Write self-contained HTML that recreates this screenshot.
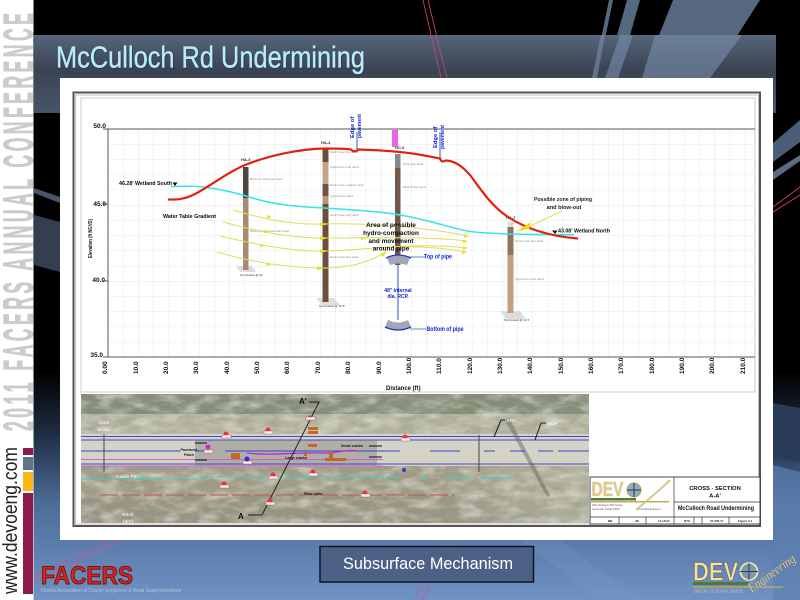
<!DOCTYPE html>
<html><head><meta charset="utf-8"><title>McCulloch Rd Undermining</title>
<style>html,body{margin:0;padding:0;background:#000;width:800px;height:600px;overflow:hidden}svg{display:block}text{font-family:"Liberation Sans",sans-serif}</style></head>
<body>
<svg xmlns="http://www.w3.org/2000/svg" width="800" height="600" viewBox="0 0 800 600">
<defs>
<linearGradient id="bg" x1="0" y1="0" x2="0" y2="1"><stop offset="0" stop-color="#000"/><stop offset=".62" stop-color="#000"/><stop offset=".72" stop-color="#1e2c42"/><stop offset=".84" stop-color="#4d6c9a"/><stop offset="1" stop-color="#7092c4"/></linearGradient>
<linearGradient id="band" x1="0" y1="0" x2="0" y2="1"><stop offset="0" stop-color="#56667b"/><stop offset=".45" stop-color="#3a4352"/><stop offset="1" stop-color="#47556a"/></linearGradient>
<linearGradient id="fade" x1="0" y1="0" x2="1" y2="0"><stop offset="0" stop-color="#bdbdaa" stop-opacity="0"/><stop offset="1" stop-color="#bdbdaa" stop-opacity=".75"/></linearGradient>
<pattern id="grid" x="108" y="129" width="15.16" height="15.2" patternUnits="userSpaceOnUse"><path d="M0 0V15.2M0 0H15.16" fill="none" stroke="#dfe3e3" stroke-width=".8"/></pattern>
<filter id="noise" x="0" y="0" width="100%" height="100%"><feTurbulence type="fractalNoise" baseFrequency=".06 .13" numOctaves="3" seed="4"/><feColorMatrix values="0 0 0 0 .3  0 0 0 0 .32  0 0 0 0 .25  1.2 0 0 0 -.5"/></filter>
<filter id="noise2" x="0" y="0" width="100%" height="100%"><feTurbulence type="fractalNoise" baseFrequency=".05 .11" numOctaves="3" seed="11"/><feColorMatrix values="0 0 0 0 .85  0 0 0 0 .85  0 0 0 0 .75  1.2 0 0 0 -.48"/></filter>
<pattern id="hatch" width="2.500" height="2.500" patternUnits="userSpaceOnUse"><rect width="2.500" height="2.500" fill="#bcbbb3"/><path d="M0 2.500L2.500 0" stroke="#93928b" stroke-width=".6"/></pattern>
<filter id="b1"><feGaussianBlur stdDeviation=".38"/></filter>
<filter id="b2"><feGaussianBlur stdDeviation=".25"/></filter>
</defs>

<rect width="800" height="600" fill="url(#bg)"/>
<path d="M773 403L800 408V462L773 458Z" fill="#2a3c57"/>
<path d="M773 465L800 472V600H773Z" fill="#5e7fb0" opacity=".7"/>
<path d="M34 188L60 197V203L34 193Z" fill="#48566a"/>
<path d="M34 215L60 222V272L34 265Z" fill="#333e50"/>
<path d="M520 540L600 600H640L560 540Z" fill="#86a2cc" opacity=".18"/>
<path d="M609 0H613L597 78H593Z" fill="#56687f"/>
<path d="M627 0H640L618 78H605Z" fill="#56687f"/>
<path d="M673 0H760L710 78H642Z" fill="#56687f"/>
<path d="M423 0L441 78M428 0L447 78" stroke="#d8447c" stroke-width=".8" fill="none"/>
<rect x="34" y="35" width="742" height="78" fill="url(#band)"/>
<path d="M601 35H605L597 78H592Z" fill="#7a8fac" opacity=".6"/>
<path d="M620 35H633L618 78H605Z" fill="#7a8fac" opacity=".6"/>
<path d="M655 35H742L710 78H642Z" fill="#7a8fac" opacity=".6"/>
<path d="M431 35L441 78M436 35L447 78" stroke="#d8447c" stroke-width=".8" fill="none" opacity=".9"/>
<path d="M773 143L800 120V142L773 162Z" fill="#4c5d76"/>
<path d="M773 172L800 155V161L773 180Z" fill="#5a6b84"/>
<path d="M773 207L800 187M773 212L800 195" stroke="#d8447c" stroke-width=".8" fill="none"/>
<path d="M453 540L422 600M446 540L415 600" stroke="#c9569a" stroke-width=".8" fill="none"/>
<path d="M108 540L33 577M122 540L33 582" stroke="#c9569a" stroke-width=".8" fill="none"/>

<rect x="0" y="0" width="33.500" height="600" fill="#fff"/>
<text transform="translate(32.500,431) rotate(-90) scale(.42,1)" font-size="42" font-weight="700" fill="#c9cbce" stroke="#c9cbce" stroke-width=".9" textLength="995" lengthAdjust="spacing" filter="url(#b2)">2011 FACERS ANNUAL CONFERENCE</text>
<rect x="23" y="448" width="10" height="7" fill="#8c1a4b"/>
<rect x="23" y="457" width="10" height="13" fill="#627387"/>
<rect x="23" y="472" width="10" height="19" fill="#fcb813"/>
<rect x="23" y="493" width="10" height="101" fill="#8c1a4b"/>
<text transform="translate(17,594) rotate(-90)" font-size="20" fill="#222" textLength="147" lengthAdjust="spacingAndGlyphs">www.devoeng.com</text>

<text x="56" y="67.500" font-size="31" fill="#2c3a48" opacity=".7" stroke="#2c3a48" stroke-width=".4" textLength="309" lengthAdjust="spacingAndGlyphs" transform="translate(1,1)">McCulloch Rd Undermining</text>
<text x="56" y="67.500" font-size="31" fill="#b9ecfb" stroke="#b9ecfb" stroke-width=".35" textLength="309" lengthAdjust="spacingAndGlyphs">McCulloch Rd Undermining</text>

<rect x="60" y="78" width="713" height="462" fill="#fff"/>
<g filter="url(#b1)">
<rect x="73.500" y="92.500" width="686.500" height="433.500" fill="#fff" stroke="#555" stroke-width="2"/>
<rect x="75.500" y="95" width="683" height="429" fill="none" stroke="#aaa" stroke-width=".7"/>
<rect x="81" y="98" width="674" height="294" fill="none" stroke="#ccc" stroke-width="1"/>
<rect x="108" y="129" width="647" height="228" fill="url(#grid)"/>
<path d="M755 129H108V357H755" fill="none" stroke="#555" stroke-width="1"/>
<path d="M103 129H108M103 204H108M103 281H108M103 357H108" stroke="#222" stroke-width=".8"/>
<g font-size="6.500" font-weight="700" fill="#111" text-anchor="end">
<text x="106" y="128">50.0</text><text x="106" y="206">45.0</text><text x="105" y="282">40.0</text><text x="103" y="357">35.0</text>
</g>
<text transform="translate(92,258) rotate(-90)" font-size="5.800" font-weight="700" fill="#111" textLength="39" lengthAdjust="spacingAndGlyphs">Elevation (ft NGVD)</text>
<g font-size="6.500" font-weight="700" fill="#111">
<text transform="translate(107,374) rotate(-90)">0.00</text><text transform="translate(138,374) rotate(-90)">10.0</text><text transform="translate(168,374) rotate(-90)">20.0</text><text transform="translate(198,374) rotate(-90)">30.0</text><text transform="translate(229,374) rotate(-90)">40.0</text><text transform="translate(259,374) rotate(-90)">50.0</text><text transform="translate(289,374) rotate(-90)">60.0</text><text transform="translate(320,374) rotate(-90)">70.0</text><text transform="translate(350,374) rotate(-90)">80.0</text><text transform="translate(381,374) rotate(-90)">90.0</text><text transform="translate(411,374) rotate(-90)">100.0</text><text transform="translate(441,374) rotate(-90)">110.0</text><text transform="translate(472,374) rotate(-90)">120.0</text><text transform="translate(502,374) rotate(-90)">130.0</text><text transform="translate(532,374) rotate(-90)">140.0</text><text transform="translate(563,374) rotate(-90)">150.0</text><text transform="translate(593,374) rotate(-90)">160.0</text><text transform="translate(623,374) rotate(-90)">170.0</text><text transform="translate(654,374) rotate(-90)">180.0</text><text transform="translate(684,374) rotate(-90)">190.0</text><text transform="translate(714,374) rotate(-90)">200.0</text><text transform="translate(745,374) rotate(-90)">210.0</text>
</g>
<text x="386" y="390" font-size="6" font-weight="700" fill="#111">Distance (ft)</text>

<path d="M236 266H252L256 272H240Z" fill="#ddd"/>
<path d="M316 298H334L340 305H322Z" fill="#ddd"/>
<path d="M500 311H520L526 319H506Z" fill="#ddd"/>
<rect x="243" y="167" width="5.500" height="31" fill="#4d4540"/><rect x="243" y="198" width="5.500" height="72" fill="#a98a74"/>
<rect x="322.500" y="149" width="6" height="13" fill="#6a5040"/><rect x="322.500" y="162" width="6" height="22" fill="#c6a488"/><rect x="322.500" y="184" width="6" height="12" fill="#6d5444"/><rect x="322.500" y="196" width="6" height="8" fill="#b09878"/><rect x="322.500" y="204" width="6" height="98" fill="#6b4f3d"/>
<rect x="395" y="154" width="5.500" height="14" fill="#888"/><rect x="395" y="168" width="5.500" height="97" fill="#6e5a4e"/>
<rect x="507.500" y="222" width="6" height="5" fill="#ddd"/><rect x="507.500" y="227" width="6" height="28" fill="#8c7462"/><rect x="507.500" y="255" width="6" height="58" fill="#c49e80"/>
<g font-size="3" fill="#888">
<text x="250" y="180">Brown to dark gray sand</text><text x="250" y="232">Brown clayey sand with roots</text>
<text x="330" y="153">Dark brown fine sand</text><text x="330" y="168">Light brown fine sand</text><text x="330" y="186">Dark brown organic sand</text><text x="330" y="197">Light brown sand</text><text x="330" y="216">Dark brown silty sand</text><text x="330" y="258">Dark brown fine sand</text>
<text x="403" y="165">Dark gray sand</text><text x="403" y="188">Dark brown sand</text><text x="515" y="242">Dark brown fine sand</text><text x="515" y="280">Light brown fine sand</text>
</g>
<g font-size="4" font-weight="700" fill="#333"><text x="241" y="161">HA-3</text><text x="321" y="144">HA-4</text><text x="395" y="149">HC-6</text><text x="506" y="219">HA-7</text></g>
<g font-size="3" fill="#333"><text x="240" y="276">Terminated @ 11'</text><text x="319" y="307">Terminated @ 16.5'</text><text x="504" y="321">Terminated @ 11.5'</text></g>

<g fill="none" stroke="#dede5a" stroke-width="1">
<path d="M233 210C260 218 290 225 320 224C360 223 420 226 468 236"/>
<path d="M223 222C260 232 290 238 323 238C370 238 420 236 467 241"/>
<path d="M220 236C250 243 290 252 325 251C370 250 410 242 467 248"/>
<path d="M217 252C250 262 290 268 323 268C350 268 370 262 386 252"/>
<path d="M395 247C420 246 445 248 466 252"/>
</g>
<g fill="#e4e021">
<path d="M267 215L272 217L267 218.500Z"/><path d="M264 230L270 231.500L264 233Z"/><path d="M260 244L266 245.500L260 247Z"/><path d="M267 263L272 264.500L266 266Z"/>
<path d="M320 222.500L329 224L320 226ZM320 236.500L329 238L320 240ZM320 249.500L329 251L320 253ZM317 266.500L326 268L317 270Z"/>
<path d="M464 234L469 236L464 238ZM463 240L468 241L463 243ZM463 246.500L468 248L463 250ZM462 250.500L467 252L462 254Z"/>
<path d="M361 237L367 238L361 240Z"/><path d="M380 254L387 251L383 257Z"/>
</g>
<path d="M171 186.500C190 186 200 186 210 188C225 190 240 194 256 199C280 206 305 207 325 208C355 210 385 212 400 215C430 220 450 228 470 231.500C490 234 520 234.500 574 234.700" fill="none" stroke="#35e4e8" stroke-width="1.500"/>
<path d="M168 199.500C180 200 187 198 195 194C212 185 228 172 245 165C270 155 300 149 325 148.500C335 148.500 345 148.500 351 149.500C353 152 356 152 358 149.500C375 150 390 151 400 152C420 154 432 157 440 158.500C441 162 443 162 446 160.500C455 161 462 166 470 175C480 188 490 205 508 217C522 226 545 236 578 238.500" fill="none" stroke="#e3200f" stroke-width="2.200"/>
<path d="M562 211L522 230" stroke="#e6e25a" stroke-width="1"/>
<path d="M517 231L531 222L529 229Z" fill="#e8e000"/>
<g stroke="#3a55c0" fill="none"><path d="M357 132V149M440 132V158M398 264V320"/><path d="M408 257H425M410 329H426" stroke="#6c80c8"/></g>
<g font-size="5.800" font-weight="700" fill="#1126d8">
<text transform="translate(354,138) rotate(-90)">Edge of</text><text transform="translate(361,138) rotate(-90)" textLength="24" lengthAdjust="spacingAndGlyphs">pavement</text>
<text transform="translate(437,148) rotate(-90)">Edge of</text><text transform="translate(444,149) rotate(-90)" textLength="24" lengthAdjust="spacingAndGlyphs">pavement</text>
<text x="424" y="258.500" font-size="6" textLength="28" lengthAdjust="spacingAndGlyphs">Top of pipe</text>
<text x="426.500" y="331" font-size="6" textLength="37" lengthAdjust="spacingAndGlyphs">Bottom of pipe</text>
<text x="398" y="292" text-anchor="middle" font-size="5">48" internal</text><text x="398" y="298" text-anchor="middle" font-size="5">dia. RCP.</text>
</g>
<rect x="392" y="130" width="6" height="17" fill="#ec62e0"/>
<path d="M387 258Q398 252 410 258L407 265Q398 262 390 265Z" fill="#a2a6b8"/>
<path d="M386 258Q398 252 411 258" fill="none" stroke="#2434c0" stroke-width="1.300"/>
<path d="M388 320Q398 325 408 320L411 327Q398 333 385 327Z" fill="#a2a6b8"/>
<path d="M385 327Q398 333 411 327" fill="none" stroke="#2434c0" stroke-width="1.300"/>
<g font-weight="700" fill="#0a0a0a">
<text x="119" y="185" font-size="5.800" textLength="53" lengthAdjust="spacingAndGlyphs">46.28' Wetland South</text>
<path d="M172.500 182.500H177.500L175 186Z"/>
<text x="163" y="218" font-size="5.800" textLength="53" lengthAdjust="spacingAndGlyphs">Water Table Gradient</text>
<g font-size="6.400" text-anchor="middle"><text x="391" y="227">Area of possible</text><text x="391" y="235">hydro-compaction</text><text x="391" y="243">and movement</text><text x="391" y="250.500">around pipe</text></g>
<text x="534" y="201" font-size="5.800" fill="#222" textLength="58" lengthAdjust="spacingAndGlyphs">Possible zone of piping</text>
<text x="564" y="209" font-size="5.600" fill="#222" text-anchor="middle">and blow-out</text>
<path d="M552 230.500H557.500L555 234Z"/>
<text x="558" y="232.500" font-size="5.800" textLength="52" lengthAdjust="spacingAndGlyphs">43.08' Wetland North</text>
</g>

<rect x="81" y="394" width="508" height="129" fill="#9a9a86"/>
<rect x="81" y="394" width="508" height="20" fill="#848d78"/>
<rect x="81" y="414" width="508" height="20" fill="#b4b4a0"/>
<rect x="81" y="466" width="508" height="30" fill="#a09c86"/>
<rect x="81" y="496" width="508" height="27" fill="#989482"/>
<rect x="430" y="466" width="159" height="57" fill="url(#fade)"/>
<rect x="81" y="394" width="508" height="40" filter="url(#noise)"/>
<rect x="81" y="394" width="508" height="40" filter="url(#noise2)"/>
<rect x="81" y="466" width="508" height="57" filter="url(#noise)"/>
<rect x="81" y="466" width="508" height="57" filter="url(#noise2)"/>
<rect x="81" y="434" width="508" height="32" fill="#d4d3c6"/>
<path d="M505 420L509 418L550 495L547 497Z" fill="#6a6a60" opacity=".5"/>
<rect x="195" y="440" width="182" height="27" fill="url(#hatch)"/>
<g fill="none" stroke-width="1.100">
<path d="M81 436.500H589M81 440H589" stroke="#4a4ad0"/>
<path d="M81 451H180M195 451H210M225 451H400M430 451H460M484 451H495M510 451H525M538 451H553M558 451H589" stroke="#3d3dd0"/>
<path d="M81 464H589" stroke="#4545c8"/>
<path d="M81 459.500H383M81 466H383" stroke="#d65ecf" stroke-width="1.100"/>
<path d="M247 453C270 456 300 452 320 453C335 454 345 449 357 451" stroke="#b02fd0" stroke-width="1.300"/>
<path d="M81 479H200L206 477H400M420 478H430M445 478H470M480 478H515" stroke="#35d0d0" stroke-dasharray="14 3"/>
<path d="M100 495H455" stroke="#c0524c" stroke-width=".9" stroke-dasharray="18 4"/>
<path d="M104 434V472" stroke="#555"/><path d="M479 435V472" stroke="#555"/>
<path d="M309 402H319L262 515H248" stroke="#222" stroke-width="1"/>
<path d="M494 437L501 420H505M535 440L541 423H546" stroke="#222"/>
<path d="M195 443H207M195 460H207M369 446H382M369 457H382" stroke="#111"/>
</g>
<g fill="#e33"><circle cx="226" cy="434" r="2.500"/><circle cx="268" cy="430" r="2.500"/><circle cx="273" cy="475" r="2.500"/><circle cx="224" cy="484" r="2.500"/><circle cx="313" cy="472" r="2.500"/><circle cx="270" cy="501" r="2.500"/><circle cx="365" cy="493" r="2.500"/><circle cx="310" cy="418" r="2.500"/><circle cx="405" cy="437" r="2.500"/></g>
<g fill="#f4f0f0" stroke="#a44" stroke-width=".4"><rect x="222" y="435" width="9" height="3"/><rect x="264" y="431" width="9" height="3"/><rect x="269" y="476" width="9" height="3"/><rect x="220" y="485" width="9" height="3"/><rect x="309" y="473" width="9" height="3"/><rect x="266" y="502" width="9" height="3"/><rect x="361" y="494" width="9" height="3"/><rect x="306" y="417" width="9" height="3"/><rect x="401" y="438" width="9" height="3"/><rect x="204" y="450" width="9" height="3"/><rect x="243" y="461" width="9" height="3"/></g>
<circle cx="208" cy="447" r="2.500" fill="#c230c8"/><circle cx="247" cy="459" r="2.500" fill="#2a2ae0"/><circle cx="404" cy="470" r="2" fill="#2a3ad0"/>
<g fill="#c4682a"><rect x="231" y="453" width="9" height="6"/><rect x="308" y="427" width="10" height="3"/><rect x="308" y="431" width="10" height="3"/><rect x="308" y="444" width="9" height="3"/><rect x="325" y="458" width="11" height="3"/><rect x="336" y="458" width="10" height="3"/><rect x="329" y="452" width="4" height="6"/><rect x="304" y="452" width="3" height="4"/></g>
<g font-size="4.500" font-weight="700" fill="#f2f2f2">
<text x="104" y="424" text-anchor="middle">Curb</text><text x="104" y="431" text-anchor="middle">brisks</text><text x="116" y="478" font-size="4.800">Cable TV</text><text x="128" y="516" text-anchor="middle">Ditch</text><text x="128" y="523" text-anchor="middle">(dry)</text><text x="507" y="422">EOC</text><text x="548" y="425">EOP</text>
</g>
<g font-size="3.600" font-weight="700" fill="#111"><text x="189" y="451" text-anchor="middle">Pavement</text><text x="189" y="456" text-anchor="middle">Patch</text><text x="285" y="459">Large cracks</text><text x="341" y="447">Small cracks</text><text x="304" y="495">Fiber optic</text></g>
<text x="299" y="404" font-size="8" font-weight="700" fill="#111">A'</text><text x="238" y="519" font-size="8" font-weight="700" fill="#111">A</text>

<rect x="590" y="477" width="170" height="47" fill="#fff" stroke="#333" stroke-width=".9"/>
<path d="M674 477V524M674 502H760M590 517H760M619 517V524M646 517V524M694 517V524M702 517V524M729 517V524" stroke="#333" stroke-width=".7" fill="none"/>
<text transform="translate(591.500,496) scale(1,1.300)" font-size="15.500" font-weight="700" fill="#e4cd8c" stroke="#b9a468" stroke-width=".25">DEV</text>
<circle cx="634" cy="490" r="7" fill="#8faebc" stroke="#b7a15f"/><path d="M627 490H641M634 483V497" stroke="#335"/>
<rect x="591" y="498" width="45" height="2.500" fill="#4e7b34"/><rect x="591" y="501" width="78" height="1.500" fill="#c7aa5e"/>
<path d="M636 510C650 498 660 490 670 480" stroke="#d8c690" stroke-width="2" fill="none"/>
<g font-size="2.400" fill="#555"><text x="592" y="506">2201 Northwest 40th Terrace</text><text x="592" y="510">Gainesville, Florida 32605</text><text x="638" y="510">Consulting Engineers</text></g>
<g font-weight="700" fill="#111" text-anchor="middle"><text x="715" y="490" font-size="5.800">CROSS - SECTION</text><text x="715" y="497.500" font-size="5.800">A-A'</text></g>
<text x="678" y="510" font-size="6.200" font-weight="700" fill="#111" textLength="76" lengthAdjust="spacingAndGlyphs">McCulloch Road Undermining</text>
<g font-size="3" font-weight="700" fill="#222"><text x="608" y="522">BB</text><text x="635" y="522">AE</text><text x="658" y="522">11-16-07</text><text x="684" y="522">NTS</text><text x="710" y="522">07-256.17</text><text x="738" y="522">Figure 5.1</text></g>
</g>

<rect x="320" y="546.500" width="213.500" height="35.500" fill="#4c6185" stroke="#0b1526" stroke-width="1.500"/>
<text x="343" y="569" font-size="16.500" fill="#fff" textLength="170" lengthAdjust="spacingAndGlyphs">Subsurface Mechanism</text>

<g filter="url(#b2)">
<text x="41" y="584" font-size="25" font-weight="700" fill="#d8261c" stroke="#6c1512" stroke-width="1" textLength="92" lengthAdjust="spacingAndGlyphs">FACERS</text>
<text x="41" y="592" font-size="5" fill="#b4c4dc" textLength="140" lengthAdjust="spacingAndGlyphs">Florida Association of County Engineers &amp; Road Superintendents</text>
</g>
<g filter="url(#b2)">
<text transform="translate(693,580.500) scale(1,1.190)" font-size="22" font-weight="700" fill="#f2e2ae" stroke="#6f5f30" stroke-width=".5">DEV</text>
<circle cx="749" cy="571.500" r="8.500" fill="#7a9aa8" stroke="#f2e2ae" stroke-width="1.800"/>
<path d="M740 571.500H758M749 563V580" stroke="#24406a" stroke-width="1"/>
<rect x="693" y="582" width="55" height="3" fill="#4f7a34"/><rect x="693" y="586.500" width="90" height="1.200" fill="#c7aa5e"/>
<text x="693" y="592.500" font-size="4.500" fill="#c9c8a0" textLength="50" lengthAdjust="spacingAndGlyphs">CONSULTING · GEOTECHNICAL ENGINEERS</text>
<text transform="translate(752,593) rotate(-36)" font-style="italic" font-size="14" fill="#eadcae" stroke="#7b6a3a" stroke-width=".2" textLength="55" lengthAdjust="spacingAndGlyphs" style="font-family:'Liberation Serif',serif">Engineering</text>
</g>
</svg>
</body></html>
